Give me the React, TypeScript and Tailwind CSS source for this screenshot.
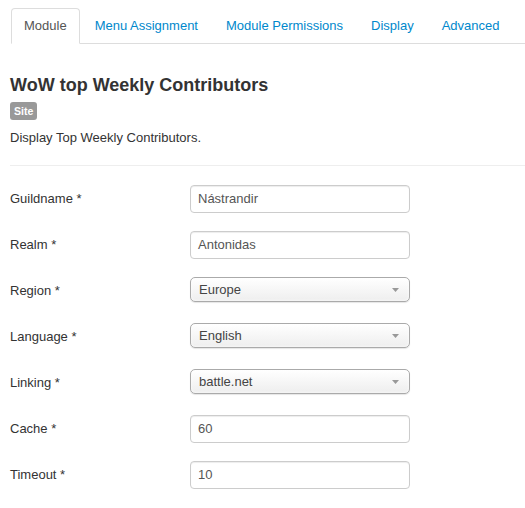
import React from 'react'

const tabs = ['Module', 'Menu Assignment', 'Module Permissions', 'Display', 'Advanced']

type Field = { label: string; value: string; kind: 'input' | 'select' }

const fields: Field[] = [
  { label: 'Guildname *', value: 'Nástrandir', kind: 'input' },
  { label: 'Realm *', value: 'Antonidas', kind: 'input' },
  { label: 'Region *', value: 'Europe', kind: 'select' },
  { label: 'Language *', value: 'English', kind: 'select' },
  { label: 'Linking *', value: 'battle.net', kind: 'select' },
  { label: 'Cache *', value: '60', kind: 'input' },
  { label: 'Timeout *', value: '10', kind: 'input' },
]

function TextBox({ value }: { value: string }) {
  return (
    <div className="w-[220px] h-[28px] border border-[#cccccc] rounded-[4px] bg-white shadow-[inset_0_1px_1px_rgba(0,0,0,0.075)] px-[7px] flex items-center text-[13px] text-[#555555]">
      {value}
    </div>
  )
}

function SelectBox({ value }: { value: string }) {
  return (
    <div className="w-[220px] h-[25px] border border-[#aaaaaa] rounded-[5px] bg-gradient-to-b from-white to-[#eeeeee] shadow-[0_0_3px_white_inset,0_1px_1px_rgba(0,0,0,0.1)] pl-[8px] pr-[10px] flex items-center justify-between text-[13px] text-[#444444]">
      <span>{value}</span>
      <svg width="7" height="4" viewBox="0 0 7 4">
        <path d="M0 0 L7 0 L3.5 4 Z" fill="#999999" />
      </svg>
    </div>
  )
}

export default function App() {
  return (
    <div className="w-[525px] h-[508px] bg-white text-[#333333] text-[13px] leading-[18px] font-['Liberation_Sans',Arial,sans-serif] overflow-hidden">
      {/* Tabs */}
      <ul className="flex ml-[11px] mt-[8px] border-b border-[#dddddd]">
        {tabs.map((tab, i) => (
          <li key={tab} className="mr-[2px] -mb-px">
            {i === 0 ? (
              <span className="block px-[12px] py-[8px] leading-[18px] border border-[#dddddd] border-b-white rounded-t-[4px] bg-white text-[#555555]">
                {tab}
              </span>
            ) : (
              <span className="block px-[12px] py-[8px] leading-[18px] border border-transparent text-[#0088cc]">
                {tab}
              </span>
            )}
          </li>
        ))}
      </ul>

      <div className="pl-[10px]">
        <h2 className="mt-[31px] text-[18px] leading-[20px] font-bold text-[#333333]">
          WoW top Weekly Contributors
        </h2>
        <span className="inline-block mt-[7px] bg-[#999999] text-white font-bold text-[10.5px] leading-[14px] px-[4px] py-[2px] rounded-[3px]">
          Site
        </span>
        <p className="mt-[9px]">Display Top Weekly Contributors.</p>
        <hr className="mt-[18px] border-0 border-t border-[#eeeeee]" />

        <div className="mt-[19px]">
          {fields.map((f) => (
            <div key={f.label} className="flex items-start h-[46px]">
              <label className="w-[180px] pt-[5px]">{f.label}</label>
              {f.kind === 'input' ? <TextBox value={f.value} /> : <SelectBox value={f.value} />}
            </div>
          ))}
        </div>
      </div>
    </div>
  )
}
